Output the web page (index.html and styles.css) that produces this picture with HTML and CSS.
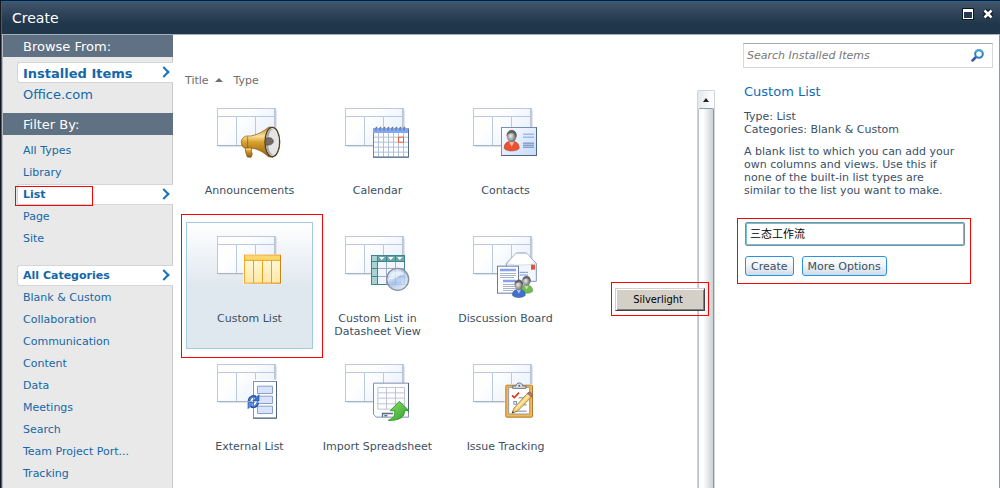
FILE: index.html
```html
<!DOCTYPE html>
<html lang="en">
<head>
  <meta charset="UTF-8" />
  <meta name="viewport" content="width=device-width, initial-scale=1" />
  <title>Create</title>
  <link rel="stylesheet" href="styles.css">
</head>
<body>

  <!-- Shared shapes -->
  <svg class="defs" width="0" height="0" aria-hidden="true">
    <defs>
      <linearGradient id="paper" x1="0" y1="0" x2="1" y2="0.6">
        <stop offset="0.4" stop-color="#fff"/><stop offset="1" stop-color="#e9f1fd"/>
      </linearGradient>
      <linearGradient id="gold" x1="0" y1="0" x2="0" y2="1">
        <stop offset="0" stop-color="#b88420"/><stop offset="0.3" stop-color="#fbe09a"/><stop offset="0.5" stop-color="#d8a02c"/><stop offset="1" stop-color="#8c5c0c"/>
      </linearGradient>
      <linearGradient id="amber" x1="0" y1="0" x2="1" y2="0">
        <stop offset="0" stop-color="#f5a623"/><stop offset="1" stop-color="#dc7d05"/>
      </linearGradient>
      <linearGradient id="cream" x1="0" y1="0" x2="0" y2="1">
        <stop offset="0" stop-color="#fffae0"/><stop offset="1" stop-color="#ffe8a6"/>
      </linearGradient>
      <linearGradient id="green" x1="0" y1="0" x2="1" y2="1">
        <stop offset="0" stop-color="#8be06c"/><stop offset="1" stop-color="#2f9e27"/>
      </linearGradient>
      <radialGradient id="grey" cx="0.4" cy="0.5">
        <stop offset="0" stop-color="#eee"/><stop offset="1" stop-color="#777"/>
      </radialGradient>
      <linearGradient id="lens" x1="0" y1="0" x2="1" y2="1">
        <stop offset="0" stop-color="#f4f8ff"/><stop offset="0.5" stop-color="#a9c4ee"/><stop offset="1" stop-color="#f2f6fd"/>
      </linearGradient>
      <linearGradient id="card" x1="0" y1="0" x2="1" y2="1">
        <stop offset="0" stop-color="#fff"/><stop offset="1" stop-color="#c6dafa"/>
      </linearGradient>
      <symbol id="base" viewBox="0 0 210 180">
        <path d="M5 116H178V5" fill="none" stroke="#dcdfe5" stroke-width="3"/>
        <rect x="1.5" y="1.5" width="172" height="111" fill="url(#paper)" stroke="#bcc8de" stroke-width="3"/>
        <path d="M3 25.5H172M58.500 26V111M115.500 26V111" stroke="#b9c8e3" stroke-width="3"/>
        <path d="M0 112.500H175M174 0V112" stroke="#a9b3c6" stroke-width="3"/>
      </symbol>
      <symbol id="person" viewBox="0 0 50 70">
        <path d="M2 57C2 42 12 35 25 36C38 35 48 42 48 57C42 68 8 68 2 57Z" fill="currentColor" stroke="#444" stroke-opacity="0.500" stroke-width="2"/>
        <path d="M17 37L25 52L33 37Z" fill="#fff" fill-opacity="0.600"/>
        <ellipse cx="25" cy="20" rx="14" ry="18" fill="url(#grey)" stroke="#777"/>
        <path d="M10 21C7 -2 43 -4 40 22C35 22 34 12 27 11C20 12 15 11 10 21Z" fill="#606060"/>
      </symbol>
    </defs>
  </svg>

  <div class="dialog">
    <header class="titlebar">
      <h1>Create</h1>
      <div class="window-buttons">
        <button type="button" aria-label="Maximize">
          <svg width="12" height="12" viewBox="0 0 12 12"><path d="M0 0H12V12H0Z" fill="#0d1720"/><path d="M1 1H11V11H1Z" fill="#fff"/><path d="M2 4H10V10H2Z" fill="#253a50"/></svg>
        </button>
        <button type="button" aria-label="Close">
          <svg width="12" height="12" viewBox="0 0 12 12"><path d="M2.500 2.500L9.500 9.500M9.500 2.500L2.500 9.500" stroke="#0d1720" stroke-width="5"/><path d="M2.500 2.500L9.500 9.500M9.500 2.500L2.500 9.500" stroke="#fff" stroke-width="2.500"/></svg>
        </button>
      </div>
    </header>

    <div class="content">
      <nav class="sidebar">
        <h2>Browse From:</h2>
        <ul class="large">
          <li class="active"><a href="#">Installed Items</a></li>
          <li><a href="#">Office.com</a></li>
        </ul>
        <h2>Filter By:</h2>
        <ul>
          <li><a href="#">All Types</a></li>
          <li><a href="#">Library</a></li>
          <li class="active marked"><a href="#">List</a></li>
          <li><a href="#">Page</a></li>
          <li><a href="#">Site</a></li>
        </ul>
        <ul class="categories">
          <li class="active"><a href="#">All Categories</a></li>
          <li><a href="#">Blank &amp; Custom</a></li>
          <li><a href="#">Collaboration</a></li>
          <li><a href="#">Communication</a></li>
          <li><a href="#">Content</a></li>
          <li><a href="#">Data</a></li>
          <li><a href="#">Meetings</a></li>
          <li><a href="#">Search</a></li>
          <li><a href="#">Team Project Port...</a></li>
          <li><a href="#">Tracking</a></li>
        </ul>
      </nav>

      <main class="browser">
        <div class="sort">
          <button type="button">Title <span class="arrow-up"></span></button>
          <button type="button">Type</button>
        </div>
        <div class="scroller">
          <div class="items">
            <button type="button" class="item">
              <svg class="icon" viewBox="0 0 210 180"><use href="#base"/>
                <path d="M84 110L105 112L103 130L106 138L102 148L91 147L86 132Z" fill="url(#gold)" stroke="#6f4b0e" stroke-width="2"/>
                <path d="M76 92C84 82 92 84 101 84C124 80 140 69 156 57L168 58V148L154 146C138 131 120 122 101 120L82 120C73 115 70 100 76 92Z" fill="url(#gold)" stroke="#7d5814" stroke-width="2"/>
                <path d="M92 85V120" stroke="#82580e" stroke-width="2"/>
                <ellipse cx="166" cy="102" rx="22" ry="44" fill="#dededf" stroke="#50401e" stroke-width="4"/>
                <ellipse cx="164" cy="102" rx="18" ry="39" fill="#aaa"/>
                <ellipse cx="169" cy="102" rx="16" ry="38" fill="#e5e5e6"/>
                <path d="M146 91C160 86 169 92 169 100C168 110 156 113 145 110Z" fill="#756c62" stroke="#4a4035" stroke-width="2"/>
              </svg>
              <span>Announcements</span>
            </button>
            <button type="button" class="item">
              <svg class="icon" viewBox="0 0 210 180"><use href="#base"/>
                <rect x="85.500" y="61.500" width="105" height="86" fill="#fff" stroke="#6b86ad" stroke-width="3"/>
                <rect x="84" y="60" width="108" height="15" fill="#82a8f3"/>
                <path d="M100.500 75V146M115.500 75V146M130.500 75V146M145.500 75V146M160.500 75V146M175.500 75V146M87 87.500H189M87 102.500H189M87 117.500H189M87 132.500H189" stroke="#b1bfd5" stroke-width="3"/>
                <path d="M84 147.500H190.500V64" fill="none" stroke="#526b82" stroke-width="3"/>
                <path d="M93 68V58H97M105 68V58H109M117 68V58H121M129 68V58H133M141 68V58H145M153 68V58H157M165 68V58H169M177 68V58H181" fill="none" stroke="#636b76" stroke-width="3"/>
                <rect x="160.500" y="87.500" width="15" height="15" fill="#fff" stroke="#f0592b" stroke-width="3"/>
              </svg>
              <span>Calendar</span>
            </button>
            <button type="button" class="item">
              <svg class="icon" viewBox="0 0 210 180"><use href="#base"/>
                <rect x="85.500" y="58.500" width="105" height="84" fill="url(#card)" stroke="#7890ac" stroke-width="3"/>
                <path d="M85 142.500H190.500V58" fill="none" stroke="#4e6680" stroke-width="3"/>
                <use href="#person" x="91" y="63" width="50" height="72" color="#ef512c"/>
                <path d="M150 78.500H183M150 87.500H183" stroke="#7ba0ef" stroke-width="3"/>
                <path d="M150 105.500H183M150 111.500H183M150 117.500H183" stroke="#627eb7" stroke-width="3"/>
              </svg>
              <span>Contacts</span>
            </button>
            <button type="button" class="item selected">
              <svg class="icon" viewBox="0 0 210 180"><use href="#base"/>
                <path d="M78 54H195V145H78Z" fill="#fff" fill-opacity="0.700"/>
                <rect x="82.500" y="57.500" width="108" height="84" fill="url(#cream)" stroke="url(#amber)" stroke-width="3"/>
                <rect x="84" y="59" width="105" height="13" fill="#fed76c"/>
                <path d="M83 73H190M109.500 73V141M136.500 73V141M163.500 73V141" stroke="#eca01c" stroke-width="3"/>
              </svg>
              <span>Custom List</span>
            </button>
            <button type="button" class="item">
              <svg class="icon" viewBox="0 0 210 180"><use href="#base"/>
                <rect x="79.500" y="58.500" width="99" height="87" fill="#f2f6fc" stroke="#3f8589" stroke-width="3"/>
                <path d="M81 60H96V144H81Z" fill="#a7d3d5"/><path d="M96 60H177V75H96Z" fill="#66a6ab"/>
                <path d="M81 76.500H178M97.500 59V145" stroke="#438589" stroke-width="3"/>
                <path d="M81 97.500H97M81 121.500H97M124.500 59V76M151.500 59V76" stroke="#438589" stroke-width="3"/>
                <path d="M98 97.500H178M98 121.500H178M124.500 78V145M151.500 78V145" stroke="#9bb0cc" stroke-width="3"/>
                <path d="M102 63H119L110 72ZM129 63H146L137 72ZM156 63H173L164 72Z" fill="#fff"/>
                <circle cx="158" cy="130" r="33" fill="url(#lens)" fill-opacity="0.850" stroke="#8b919b" stroke-width="4"/>
                <path d="M131 123H177M151 103V144M131 140H171" stroke="#8eaad2" stroke-width="2" stroke-opacity="0.600"/>
                <path d="M132 128C138 104 166 99 181 116C163 111 151 136 132 128Z" fill="#fff" fill-opacity="0.600"/>
              </svg>
              <span>Custom List in Datasheet View</span>
            </button>
            <button type="button" class="item">
              <svg class="icon" viewBox="0 0 210 180"><use href="#base"/>
                <path d="M100 82L130 51H160L190 82V136H100Z" fill="#f2f6ff" stroke="#8496b9" stroke-width="3"/>
                <path d="M102 83L128 53H162L188 83L158 87H126Z" fill="#fff" stroke="#c4cddd" stroke-width="2"/>
                <rect x="174" y="86" width="12" height="15" fill="#e35334"/>
                <path d="M140 109H165M140 117H165" stroke="#7897d0" stroke-width="3"/>
                <rect x="73.500" y="90.500" width="63" height="81" fill="#fff" stroke="#687c9d" stroke-width="3"/>
                <path d="M81 102H129M90 135H129" stroke="#86a0ee" stroke-width="8"/>
                <path d="M81 112.500H129M81 118.500H129M81 124.500H123M90 145.500H129M90 151.500H129M90 157.500H129M90 163.500H120" stroke="#a8b4c8" stroke-width="3"/>
                <use href="#person" x="137" y="118" width="47" height="58" color="#6fbd4c"/>
                <use href="#person" x="113" y="129" width="49" height="60" color="#3e70cf"/>
              </svg>
              <span>Discussion Board</span>
            </button>
            <button type="button" class="item">
              <svg class="icon" viewBox="0 0 210 180"><use href="#base"/>
                <rect x="105" y="47" width="79" height="120" fill="#fff"/>
                <rect x="109.500" y="52.500" width="69" height="110" fill="#fff" stroke="#7f93ac" stroke-width="3"/>
                <path d="M109 162.500H178.500V52" fill="none" stroke="#4b6075" stroke-width="3"/>
                <path d="M121.500 66.500H166.500V88.500H121.500ZM121.500 96.500H166.500V118.500H121.500ZM121.500 126.500H166.500V148.500H121.500Z" fill="#d7e3ff" stroke="#8ba0c0" stroke-width="3"/>
                <path d="M96 111C97 99 109 94 117 100" fill="none" stroke="#2452a8" stroke-width="8"/>
                <path d="M126 92V111H107Z" fill="#3670d1" stroke="#2452a8" stroke-width="2"/>
                <path d="M122 116C121 128 109 132 101 126" fill="none" stroke="#2452a8" stroke-width="8"/>
                <path d="M93 134V115H112Z" fill="#568ee8" stroke="#2452a8" stroke-width="2"/>
                <path d="M97 109C99 100 109 97 115 102M121 117C119 126 109 129 103 124" fill="none" stroke="#709ff0" stroke-width="3"/>
              </svg>
              <span>External List</span>
            </button>
            <button type="button" class="item">
              <svg class="icon" viewBox="0 0 210 180"><use href="#base"/>
                <path d="M85.500 57.500H190.500V159.500H94L85.500 151Z" fill="#fbfdff" stroke="#8190ad" stroke-width="3"/>
                <path d="M190.500 57V145" stroke="#4c607c" stroke-width="3"/>
                <path d="M98.500 70.500H178.500V135.500H98.500ZM98.500 86.500H178.500M98.500 102.500H178.500M98.500 119.500H178.500M124.500 70V135M151.500 70V135" fill="none" stroke="#c3c4d3" stroke-width="3"/>
                <path d="M112.500 159V148.500H144" fill="none" stroke="#596d8d" stroke-width="4"/>
                <path d="M118 155H127" stroke="#596d8d" stroke-width="5"/>
                <path d="M163 112L192 140H178C180 160 162 170 130 169C146 162 151 154 149 140H136Z" fill="url(#green)" stroke="#379d2d" stroke-width="3"/>
              </svg>
              <span>Import Spreadsheet</span>
            </button>
            <button type="button" class="item">
              <svg class="icon" viewBox="0 0 210 180"><use href="#base"/>
                <rect x="95" y="60" width="88" height="104" fill="#fff"/>
                <rect x="98.500" y="63.500" width="80" height="96" rx="3" fill="#f5ba4b" stroke="#b47a24" stroke-width="3"/>
                <path d="M107 70H170V150H107Z" fill="#fff" stroke="#8e99aa" stroke-width="3"/>
                <path d="M119 73V66H129C129 54 149 54 149 66H159V73Z" fill="#dce1e9" stroke="#687382" stroke-width="3"/>
                <circle cx="139" cy="65" r="3" fill="#596370"/>
                <path d="M117 94L124 101L138 86" fill="none" stroke="#dc371d" stroke-width="5"/>
                <rect x="122.500" y="112.500" width="8" height="8" fill="#fff" stroke="#7b91b8" stroke-width="3"/>
                <path d="M137 101.500H161M137 122.500H161M122 141.500H161" stroke="#7188b1" stroke-width="3"/>
                <path d="M117 148L123 132L165 86L177 97L134 141Z" fill="#f7cf70" stroke="#80622e" stroke-width="2"/>
                <path d="M117 148L119 141L124 145Z" fill="#333"/>
                <path d="M128 136L171 91" stroke="#fff0b8" stroke-width="4"/>
                <path d="M163 88L170 83L179 92L175 99Z" fill="#d86568" stroke="#586271" stroke-width="2"/>
              </svg>
              <span>Issue Tracking</span>
            </button>
          </div>
          <div class="scrollbar" aria-hidden="true">
            <div class="scroll-up"><span class="arrow-up"></span></div>
            <div class="thumb"></div>
          </div>
          <div class="context-menu"><button type="button">Silverlight</button></div>
        </div>
      </main>

      <aside class="details">
        <div class="search">
          <input type="text" aria-label="Search Installed Items" placeholder="Search Installed Items" />
          <button type="button" aria-label="Search">
            <svg width="13" height="13" viewBox="0 0 13 13">
              <path d="M1.500 11.500L5 8" stroke="#3b55a8" stroke-width="2.500" stroke-linecap="round"/>
              <circle cx="8" cy="5" r="3.800" fill="#fff" stroke="#2f7fc4" stroke-width="2"/>
              <path d="M4.600 3.200A3.800 3.800 0 0 1 11.400 3.200" fill="none" stroke="#45a7dc" stroke-width="2"/>
            </svg>
          </button>
        </div>
        <h2>Custom List</h2>
        <p class="meta">Type: List<br>Categories: Blank &amp; Custom</p>
        <p class="description">A blank list to which you can add your own columns and views. Use this if none of the built-in list types are similar to the list you want to make.</p>
        <form class="create-form">
          <input type="text" name="name" aria-label="Name" value="三态工作流" />
          <button type="submit">Create</button>
          <button type="button">More Options</button>
        </form>
      </aside>
    </div>
  </div>

</body>
</html>
```
FILE: styles.css
```css
*, *::before, *::after {
  box-sizing: border-box;
}
body {
  margin: 0;
  font-family: Verdana, 'DejaVu Sans', 'Noto Sans CJK SC', sans-serif;
  font-size: 11px;
  line-height: 13px;
  color: #3b4f65;
  background: #fff;
}
h1, h2, p, ul {
  margin: 0;
  padding: 0;
  font-weight: normal;
}
ul {
  list-style: none;
}
a {
  color: #1467a8;
  text-decoration: none;
}
button, input {
  font: inherit;
  color: inherit;
}
button {
  padding: 0;
  border: none;
  background: none;
}
svg {
  display: block;
}
.defs {
  position: absolute;
}

/* Window frame */
.dialog {
  display: flex;
  flex-direction: column;
  min-height: 100vh;
  border-top: 1px solid #14191f;
  border-left: 1px solid #14191f;
}
.titlebar {
  display: flex;
  justify-content: space-between;
  height: 34px;
  padding: 0 6px 0 10px;
  border-top: 1px solid #1c69a8;
  border-left: 1px solid #1c69a8;
  border-bottom: 1px solid #a5aebb;
  background: linear-gradient(#42566b, #2c4259 40%, #21374c 65%, #20364b);
}
.titlebar h1 {
  font-size: 14px;
  line-height: 32px;
  color: #fff;
}
.window-buttons {
  display: flex;
  align-items: flex-start;
  gap: 8px;
  padding-top: 6px;
}
.content {
  display: flex;
  flex: 1;
  border-left: 1px solid #1c69a8;
  border-right: 1px solid #8b99aa;
}

/* Sidebar */
.sidebar {
  flex: 0 0 171px;
  border-left: 1px solid #b4bcc6;
  background: linear-gradient(to left, #c8cace 1px, #e9e9e9 1px);
}
.sidebar h2 {
  height: 22px;
  padding-left: 20px;
  font-size: 13px;
  line-height: 24px;
  color: #fff;
  background: #5f7182;
}
.sidebar ul {
  padding: 5px 0 0 14px;
}
.sidebar .large {
  padding-bottom: 7px;
  font-size: 13px;
}
.sidebar .categories {
  padding-top: 15px;
}
.sidebar li {
  position: relative;
  height: 22px;
}
.sidebar a {
  display: block;
  padding-left: 6px;
  line-height: 22px;
}
.sidebar .active a {
  height: 21px;
  padding-left: 5px;
  border: 1px solid #d3d5d8;
  border-right: none;
  border-radius: 3px 0 0 3px;
  background: #fff;
  font-weight: bold;
  line-height: 19px;
}
.sidebar .large .active a {
  line-height: 21px;
}
.active::before {
  content: '';
  position: absolute;
  top: 6px;
  right: 5px;
  width: 8px;
  height: 8px;
  border-top: 2px solid #1573bd;
  border-right: 2px solid #1573bd;
  transform: rotate(45deg);
}
.marked::after {
  content: '';
  position: absolute;
  top: 2px;
  left: -2px;
  width: 78px;
  height: 20px;
  border: 1px solid #f00;
}

/* Item browser */
.browser {
  display: flex;
  flex-direction: column;
  flex: 1;
}
.sort {
  display: flex;
  gap: 11px;
  height: 55px;
  padding: 38px 12px 0;
  color: #6e6e6e;
}
.sort button {
  display: flex;
  align-items: center;
  gap: 6px;
  height: 14px;
}
.arrow-up {
  border: 4px solid transparent;
  border-top: none;
  border-bottom: 4px solid #6e6e6e;
}
.scroller {
  position: relative;
  display: flex;
  flex: 1;
}
.items {
  display: grid;
  grid-template-columns: repeat(auto-fill, 128px);
  grid-auto-rows: 128px;
  flex: 1;
  padding: 4px 20px 0 13px;
}
.item {
  position: relative;
  display: flex;
  flex-direction: column;
  width: 127px;
  height: 127px;
  padding-top: 13px;
  border: 1px solid transparent;
}
.item span {
  align-self: center;
  max-width: 110px;
  margin-top: 16px;
}
.icon {
  flex: none;
  width: 70px;
  height: 60px;
  margin-left: 30px;
  overflow: visible;
}
.selected {
  border-color: #a3cbe2;
  background: linear-gradient(#fff, #e0e8ef 50%);
}
.selected::after {
  content: '';
  position: absolute;
  top: -9px;
  right: -11px;
  bottom: -10px;
  left: -6px;
  border: 1px solid #f00;
}
.scrollbar {
  display: flex;
  flex-direction: column;
  width: 18px;
  border: 1px solid #cfd4da;
  border-bottom: none;
  border-radius: 2px 2px 0 0;
}
.scroll-up {
  display: flex;
  align-items: center;
  justify-content: center;
  height: 17px;
  background: linear-gradient(to right, #e4e8ec, #fff);
}
.scroll-up .arrow-up {
  border-width: 0 3px 4px;
  border-bottom-color: #222;
}
.thumb {
  flex: 1;
  border: 1px solid #8a9bab;
  border-left-color: #b9c2cb;
  border-bottom: none;
  border-radius: 2px 2px 0 0;
  background: linear-gradient(to right, #fff 30%, #ccd0d4);
}
.context-menu {
  position: absolute;
  top: 192px;
  right: 6px;
  padding: 5px 3px 4px;
  border: 1px solid #f00;
}
.context-menu button {
  display: block;
  width: 90px;
  height: 23px;
  padding-right: 4px;
  border: 1px solid;
  border-color: #d4d0c8 #404040 #404040 #d4d0c8;
  box-shadow: inset 1px 1px #fff, inset -1px -1px #808080;
  background: #d4d0c8;
  font-family: Tahoma, 'DejaVu Sans Condensed', sans-serif;
  color: #000;
}

/* Details pane */
.details {
  flex: 0 0 284px;
  padding: 8px 6px 0 28px;
}
.search {
  display: flex;
  align-items: center;
  height: 25px;
  padding: 0 8px 0 3px;
  border: 1px solid #d8d8d8;
  border-top-color: #a8a8a8;
}
.search input {
  flex: 1;
  min-width: 0;
  padding: 0;
  border: none;
  outline: none;
}
.search input::placeholder {
  font-style: italic;
  color: #777;
  opacity: 1;
}
.details h2 {
  margin: 16px 0 0 1px;
  font-size: 13px;
  line-height: 16px;
  color: #0f6cb5;
}
.meta {
  margin: 10px 0 0 1px;
}
.description {
  max-width: 216px;
  margin: 9px 0 0 1px;
}
.create-form {
  display: flex;
  flex-wrap: wrap;
  gap: 10px 8px;
  max-width: 234px;
  margin: 21px 0 0 -6px;
  padding: 3px 5px 7px 7px;
  border: 1px solid #f00;
}
.create-form input {
  width: 100%;
  height: 24px;
  padding: 0 4px 2px;
  border: 1px solid #7d8e9c;
  border-radius: 2px;
  outline: none;
  box-shadow: inset 0 0 0 1px #6fc0d4;
  color: #000;
}
.create-form button {
  height: 20px;
  padding: 0 5px;
  border: 1px solid #2a93e0;
  border-radius: 3px;
  background: linear-gradient(#fff, #f0f3f7 50%, #cfdbe7);
}
```
